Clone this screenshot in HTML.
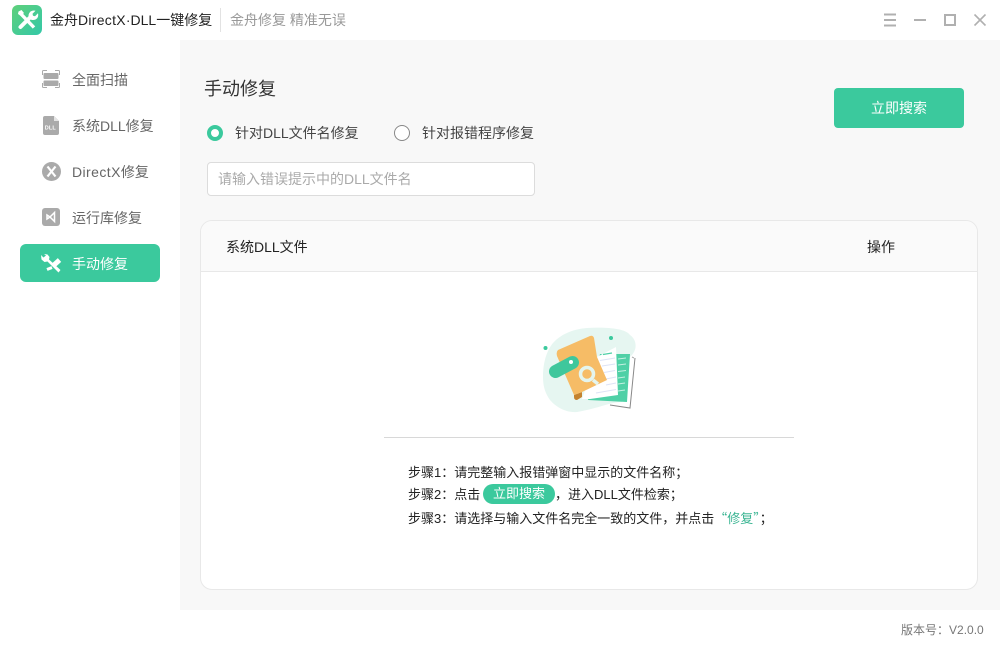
<!DOCTYPE html>
<html lang="zh"><head><meta charset="utf-8"><style>
*{box-sizing:border-box;margin:0;padding:0}
html,body{width:1000px;height:650px;overflow:hidden;background:#fff;font-family:"Liberation Sans","Noto Sans CJK SC",sans-serif}
.a{position:absolute;white-space:nowrap;line-height:20px}
svg{position:absolute;display:block}
.t{font-family:"Noto Sans CJK TC",sans-serif}
.c{font-family:"Noto Sans CJK SC",sans-serif}
.d{letter-spacing:.42px}
</style></head><body>
<div class="a" style="left:180px;top:40px;width:820px;height:570px;background:#f8f8f8"></div>

<svg style="left:12px;top:5px" width="30" height="30" viewBox="0 0 30 30"><defs><linearGradient id="g" x1="0" y1="0" x2="1" y2="1"><stop offset="0" stop-color="#5fd07a"/><stop offset="1" stop-color="#33c8a8"/></linearGradient></defs><rect width="30" height="30" rx="6" fill="url(#g)"/>
<path d="M8 8l14 14.500" stroke="#fff" stroke-width="3.400" fill="none"/>
<path d="M6.500 6.500l3-1.500 2.500 3-3 3-3-2z" fill="#fff"/>
<path d="M8.500 22L19 11.500" stroke="#fff" stroke-width="4" stroke-linecap="round" fill="none"/>
<path d="M18.500 6.500q2.500-1.500 5-.8l-3 3 .5 2 2 .5 3-3q.7 3-.8 5-2.500 2.500-6 1.500l-2.500-2.500q-.8-3 1.800-5.700z" fill="#fff"/></svg>
<div class="a" style="left:50px;top:10px;font-size:14px;color:#222">金舟<span style="letter-spacing:.28px">DirectX</span>·DLL一键修复</div>
<div class="a" style="left:220px;top:8px;width:1px;height:24px;background:#e2e2e2"></div>
<div class="a" style="left:230px;top:10px;font-size:14px;color:#999">金舟修复 精准无误</div>

<svg style="left:880px;top:10px" width="110" height="20" viewBox="0 0 110 20" fill="none" stroke="#b0b0b0" stroke-width="2"><path d="M4 4.500h12M4 10h12M4 15.500h12M34 10h12"/><rect x="65" y="5" width="10" height="10" stroke-width="2"/><path d="M94.500 4.500l11 11M105.500 4.500l-11 11" stroke-width="1.600"/></svg>

<svg style="left:42px;top:70px" width="18" height="18" viewBox="0 0 18 18" fill="none"><path d="M.5 5V1.500Q.5.500 1.500.500H5M13 .500h3.500q1 0 1 1V5M17.500 13v3.500q0 1-1 1H13M5 17.500H1.500q-1 0-1-1V13" stroke="#aaa"/><rect x="1.500" y="3" width="15" height="6" rx="1" fill="#aaa"/><rect x="1.500" y="10.500" width="15" height="5.500" rx="1" fill="#aaa"/></svg>
<div class="a" style="left:72px;top:70px;font-size:14px;color:#666">全面扫描</div>

<svg style="left:43px;top:116px" width="16" height="19" viewBox="0 0 16 19"><path d="M2 0h9l5 5v12a2 2 0 0 1-2 2H2a2 2 0 0 1-2-2V2a2 2 0 0 1 2-2z" fill="#aaa"/><path d="M11 0l5 5h-5z" fill="#e4e4e4"/><text x="1.800" y="13.500" font-size="5.500" font-weight="700" fill="#fff" font-family="Liberation Sans" letter-spacing=".1">DLL</text></svg>
<div class="a" style="left:72px;top:116px;font-size:14px;color:#666">系统DLL修复</div>

<svg style="left:42px;top:162px" width="19" height="19" viewBox="0 0 19 19"><circle cx="9.500" cy="9.500" r="9.500" fill="#aaa"/><path d="M5.500 4.500l8 10M13.500 4.500l-8 10" stroke="#fff" stroke-width="2.200"/></svg>
<div class="a" style="left:72px;top:162px;font-size:14px;color:#666"><span class="d">DirectX</span>修复</div>

<svg style="left:42px;top:208px" width="18" height="18" viewBox="0 0 18 18"><rect width="18" height="18" rx="3" fill="#aaa"/><path d="M12.500 4.500v9L8 9zM5 7l3 2-3 2z" fill="none" stroke="#fff" stroke-width="1.500"/></svg>
<div class="a" style="left:72px;top:208px;font-size:14px;color:#666">运行库修复</div>

<div class="a" style="left:20px;top:244px;width:140px;height:38px;background:#3bc99d;border-radius:6px"></div>
<svg style="left:36px;top:250px" width="30" height="26" viewBox="0 0 30 26" fill="none">
<path d="M5 5l2.500 2.500 2.500-2L8 4l3.500.5 2 2.500-.5 2.500L24.500 20l-2 2.500L11.500 11.500l-3 .5L5.500 9.500z" fill="#fff"/>
<path d="M23.500 10l-5.500 5" stroke="#fff" stroke-width="5"/>
<path d="M16 17.500l-5 2" stroke="#fff" stroke-width="3"/></svg>
<div class="a" style="left:72px;top:254px;font-size:14px;color:#fff">手动修复</div>

<div class="a" style="left:204px;top:78px;font-size:18px;line-height:22px;color:#333">手动修复</div>
<div class="a" style="left:207px;top:125px;width:16px;height:16px;border:4px solid #3bc99d;border-radius:50%;background:#fff"></div>
<div class="a" style="left:235px;top:123px;font-size:14px;color:#444">针对DLL文件名修复</div>
<div class="a" style="left:394px;top:125px;width:16px;height:16px;border:1px solid #888;border-radius:50%;background:#fff"></div>
<div class="a" style="left:422px;top:123px;font-size:14px;color:#444">针对报错程序修复</div>
<div class="a" style="left:207px;top:162px;width:328px;height:34px;background:#fff;border:1px solid #dcdcdc;border-radius:4px"></div>
<div class="a" style="left:218px;top:169px;font-size:14px;color:#aaa">请输入错误提示中的DLL文件名</div>
<div class="a" style="left:834px;top:88px;width:130px;height:40px;background:#3bc99d;border-radius:4px;color:#fff;font-size:14px;line-height:40px;text-align:center">立即搜索</div>

<div class="a" style="left:200px;top:220px;width:778px;height:370px;background:#fff;border:1px solid #e8e8e8;border-radius:12px;overflow:hidden"><div style="height:51px;background:#fafafa;border-bottom:1px solid #e8e8e8"></div></div>
<div class="a" style="left:226px;top:237px;font-size:14px;color:#222">系统DLL文件</div>
<div class="a" style="left:867px;top:237px;font-size:14px;color:#222">操作</div>

<svg style="left:530px;top:320px" width="120" height="100" viewBox="530 320 120 100">
<path d="M543 377C543 360 548 349 553 343C562 333 575 329 587 328C605 327 625 328 630 335C637 340 638 350 630 357L622 402C610 402 600 408 577 412C565 413 555 406 550 400C545 393 543 386 543 377z" fill="#e6f6f1"/>
<circle cx="545.500" cy="348" r="2" fill="#3bc99d"/><circle cx="611" cy="338" r="2" fill="#3bc99d"/>
<path d="M635 358L630 408L610 405" fill="none" stroke="#888" stroke-width="1"/>
<path d="M632 357L634 358" stroke="#aaa" stroke-width="1"/>
<path d="M600 354L630 354L627 402L588 400z" fill="#4fd0a6"/>
<path d="M618 359l8-1M618 365l8-1M618 371.500l8-1M618 378l7-1M618 384l7-1M618 391l7-1" stroke="#c5f0e1" stroke-width="1"/>
<path d="M597 357L616 347L618 395L590 399L582 399z" fill="#fff"/>
<path d="M603 354.500l9-1.500" stroke="#4fd0a6" stroke-width="1.200"/>
<path d="M600 360.500l15-2.500M602 366l13-2M604 372.500l11-2M606 379l10-2M606 385l10-2M596 393l20-3.500" stroke="#dde3f5" stroke-width="1"/>
<path d="M574 395l8-3v5l-5 3q-3 0-3-3z" fill="#c4822f"/>
<path d="M558 350L590 336q3-1 4 2L597 357L607 380L582 392L574 395L557 356q-1-4 1-6z" fill="#f6bc66"/>
<path d="M555.500 371.500L572.500 362.500" stroke="#3fc79c" stroke-width="13" stroke-linecap="round"/>
<circle cx="571" cy="362" r="2" fill="#fff"/>
<path d="M593 380l5 4" stroke="#e4f5ee" stroke-width="3.500"/>
<circle cx="587" cy="374" r="6.500" fill="#f6bc66" stroke="#e4f5ee" stroke-width="3.500"/>
</svg>

<div class="a" style="left:384px;top:437px;width:410px;height:1px;background:#d8d8d8"></div>
<div class="a" style="left:408px;top:462px;font-size:13px;color:#222">步骤1<span class="t">：</span>请完整输入报错弹窗中显示的文件名称<span class="c">；</span></div>
<div class="a" style="left:408px;top:484px;font-size:13px;color:#222">步骤2<span class="t">：</span>点击</div>
<div class="a" style="left:483px;top:484px;width:72px;height:20px;background:#3bc99d;border-radius:10px;color:#fff;font-size:13px;text-align:center">立即搜索</div>
<div class="a" style="left:555px;top:484px;font-size:13px;color:#222">，进入DLL文件检索<span class="c">；</span></div>
<div class="a" style="left:408px;top:508px;font-size:13px;color:#222">步骤3<span class="t">：</span>请选择与输入文件名完全一致的文件，并点击<span class="c" style="color:#3bb593">“修复”</span><span class="c">；</span></div>

<div class="a" style="left:901px;top:620px;font-size:12px;color:#777">版本号<span class="t">：</span>V2.0.0</div>
</body></html>
